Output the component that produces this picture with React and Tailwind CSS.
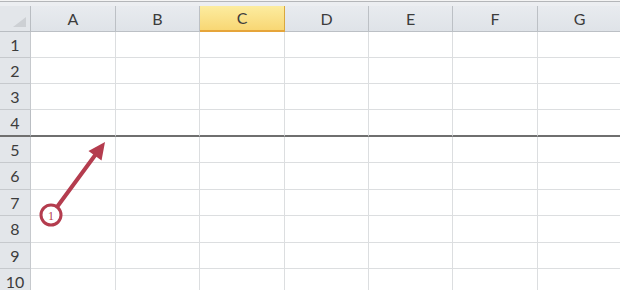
import React from "react";

const cols = [
  { l: "A", w: 85 },
  { l: "B", w: 84 },
  { l: "C", w: 85, sel: true },
  { l: "D", w: 84 },
  { l: "E", w: 84 },
  { l: "F", w: 85 },
  { l: "G", w: 84 },
];
const rows = [26, 26, 26, 27, 26, 27, 26, 27, 26, 26];

export default function App() {
  return (
    <div
      className="relative w-[620px] h-[290px] overflow-hidden bg-white"
      style={{ fontFamily: "Lato, 'Open Sans', sans-serif" }}
    >
      <div className="h-[1px] bg-[#f4f4f4]" />
      <div className="h-[1px] bg-[#b4b6b9]" />
      <div className="h-[4px] bg-[#eceef1]" />
      {/* header row */}
      <div className="flex h-[26px]">
        <div className="relative w-[31px] shrink-0 bg-[#e3e6ea] border-r border-b border-[#b9bdc2]">
          <div className="absolute right-[4px] bottom-[4px] w-0 h-0 border-l-[13px] border-l-transparent border-b-[10px] border-b-[#cdd0d4]" />
        </div>
        {cols.map((c) => (
          <div
            key={c.l}
            style={{ width: c.w }}
            className={
              c.sel
                ? "shrink-0 flex items-center justify-center text-[16px] text-[#3c3c3c] bg-gradient-to-b from-[#fcec9f] to-[#f8d774] border-r border-[#d9a83e] border-b-2 border-b-[#e6a53a]"
                : "shrink-0 flex items-center justify-center text-[16px] text-[#3c3c3c] bg-gradient-to-b from-[#e8ebef] to-[#dfe3e8] border-r border-b border-[#bcc0c5]"
            }
          >
            {c.l}
          </div>
        ))}
      </div>
      {rows.map((h, i) => (
        <div key={i} className="flex" style={{ height: h }}>
          <div
            className={
              i === 3
                ? "w-[31px] shrink-0 flex items-center justify-center text-[16px] text-[#3c3c3c] bg-[#e3e6ea] border-r border-[#b9bdc2] border-b-2 border-b-[#6f6f6f]"
                : "w-[31px] shrink-0 flex items-center justify-center text-[16px] text-[#3c3c3c] bg-[#e3e6ea] border-r border-b border-[#c6c9cd]"
            }
          >
            {i + 1}
          </div>
          {cols.map((c) => (
            <div
              key={c.l}
              style={{ width: c.w }}
              className={
                i === 3
                  ? "shrink-0 border-r border-[#dcdee0] border-b-2 border-b-[#6f6f6f]"
                  : "shrink-0 border-r border-b border-[#dcdee0]"
              }
            />
          ))}
        </div>
      ))}
      <svg
        className="absolute inset-0 pointer-events-none"
        width="620"
        height="290"
        viewBox="0 0 620 290"
      >
        <line x1="57" y1="207" x2="96" y2="154" stroke="#b43c4e" strokeWidth="4" strokeLinecap="round" />
        <polygon points="105,142 101.5,160.5 88.5,151" fill="#b43c4e" />
        <circle cx="51" cy="215" r="10" fill="white" stroke="#b43c4e" strokeWidth="3" />
        <text
          x="51"
          y="219.5"
          textAnchor="middle"
          fontSize="12"
          fill="#b43c4e"
          fontFamily="'Liberation Serif', serif"
        >
          1
        </text>
      </svg>
    </div>
  );
}
